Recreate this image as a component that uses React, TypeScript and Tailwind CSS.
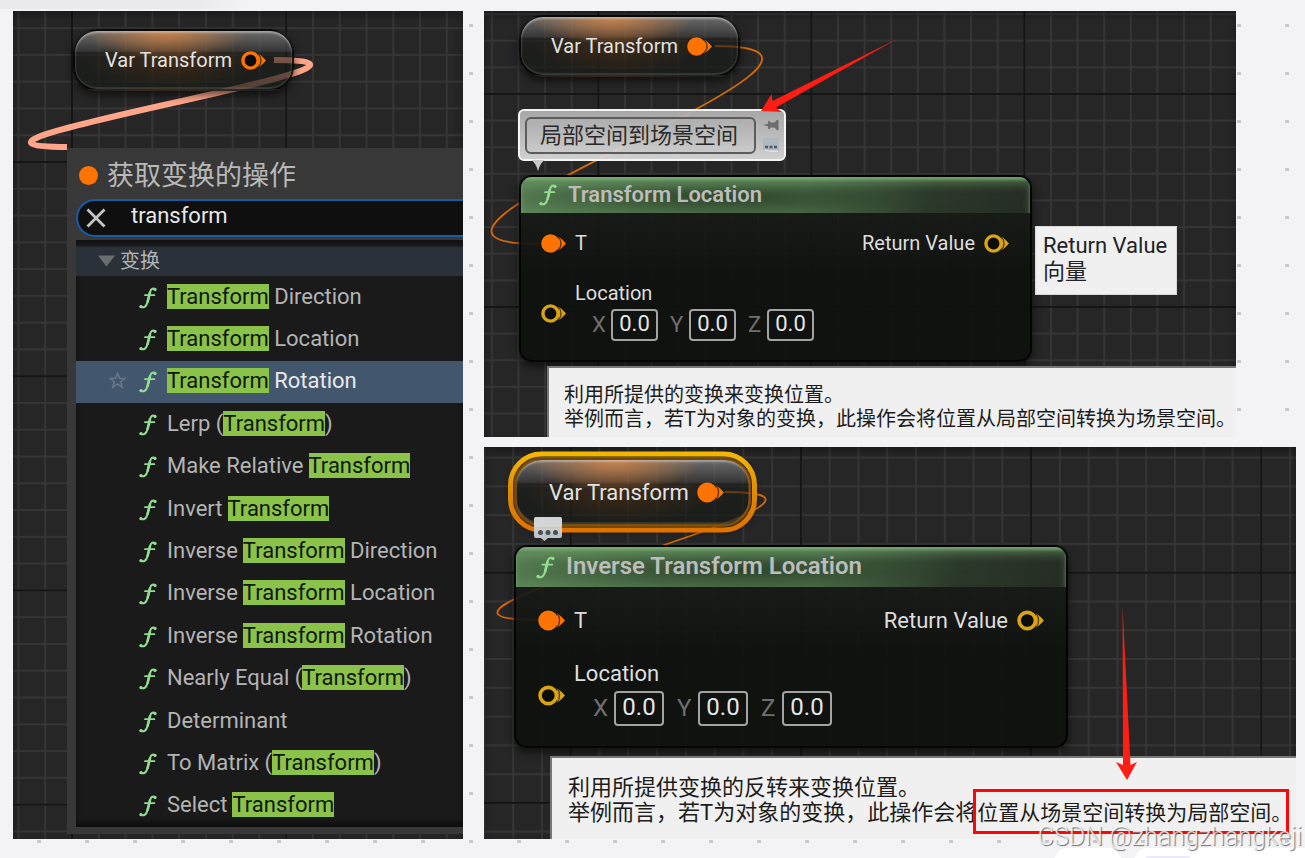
import React, { useId } from "react";

type Size = "sm" | "lg";

const ORANGE = "#ff7300";
const YELLOW = "#d9a514";

function Grid({ x, y, period }: { x: number; y: number; period: number }) {
  const id = useId();
  const cell = period / 8;
  return (
    <svg className="absolute inset-0 size-full" aria-hidden="true">
      <defs>
        <pattern id={`${id}minor`} x={x - 1} y={y - 1} width={cell} height={cell} patternUnits="userSpaceOnUse">
          <path d={`M0 1H${cell}M1 0V${cell}`} stroke="#353535" strokeWidth="2" />
        </pattern>
        <pattern id={`${id}major`} x={x - 1} y={y - 1} width={period} height={period} patternUnits="userSpaceOnUse">
          <path d={`M0 1H${period}M1 0V${period}`} stroke="#151515" strokeWidth="2" />
        </pattern>
      </defs>
      <rect width="100%" height="100%" fill="#262626" />
      <rect width="100%" height="100%" fill={`url(#${id}minor)`} />
      <rect width="100%" height="100%" fill={`url(#${id}major)`} />
    </svg>
  );
}

function Canvas({
  grid,
  className,
  label,
  children,
}: {
  grid: { x: number; y: number; period: number };
  className: string;
  label: string;
  children: React.ReactNode;
}) {
  return (
    <section aria-label={label} className={`relative overflow-hidden ${className}`}>
      <Grid {...grid} />
      <div className="absolute inset-0 shadow-[inset_0_4px_8px_rgba(0,0,0,0.3)]" />
      {children}
    </section>
  );
}

function Pin({ color, filled, size }: { color: string; filled?: boolean; size: Size }) {
  return (
    <svg
      viewBox="0 0 25 19"
      className={size === "sm" ? "h-[19px] w-[25px] shrink-0" : "h-[21px] w-[27px] shrink-0"}
      aria-hidden="true"
    >
      <path d="M17.5 2.8Q20.5 4.500 25 9.5Q20.500 14.500 17.5 16.2Z" fill={color} />
      <path d="M17.800 3Q22.200 9.500 17.800 16" fill="none" stroke="#2a1a05" strokeOpacity="0.75" strokeWidth="1.2" />
      {filled ? (
        <circle cx="9.5" cy="9.5" r="9.3" fill={color} />
      ) : (
        <circle cx="9.5" cy="9.5" r="7.6" fill="#0c0c0c" stroke={color} strokeWidth="3.4" />
      )}
    </svg>
  );
}

function FnIcon({ className }: { className: string }) {
  return (
    <svg viewBox="0 0 18 22" className={className} aria-hidden="true">
      <g fill="none" stroke="#92dd92" strokeLinecap="round">
        <path d="M16.2 2.4C13.6 .6 11.8 2.2 11.1 5L8.4 15.6C7.5 19.3 5 21.3 1.8 19.9" strokeWidth="2" />
        <path d="M10.9 5.6L8.6 15" strokeWidth="2.6" />
        <path d="M6 8.2H15.4" strokeWidth="1.8" />
      </g>
      <circle cx="16" cy="2.4" r="1.6" fill="#92dd92" />
      <circle cx="2" cy="19.6" r="1.7" fill="#92dd92" />
    </svg>
  );
}

function VarNode({
  size,
  filled,
  selected,
  className,
}: {
  size: Size;
  filled?: boolean;
  selected?: boolean;
  className: string;
}) {
  const id = useId();
  return (
    <div
      className={`absolute flex items-center border-2 border-black/70 bg-[radial-gradient(ellipse_38%_48%_at_42%_0%,rgba(214,134,72,0.9),rgba(214,134,72,0)),radial-gradient(ellipse_40%_50%_at_45%_50%,rgba(120,60,10,0.35),rgba(120,60,10,0)),linear-gradient(180deg,rgba(125,125,125,0.8)_0%,rgba(70,70,70,0.55)_34%,rgba(25,27,24,0.55)_38%,rgba(22,26,22,0.75)_100%)] text-[#e2e2e2] shadow-[inset_0_2px_2px_rgba(210,210,210,0.55),inset_0_-2px_1px_rgba(110,110,110,0.35),0_4px_8px_rgba(0,0,0,0.6)] ${
        size === "sm"
          ? "h-[62px] w-[221px] gap-[9px] rounded-[24px] pl-[30px] text-[20px]"
          : "h-[68px] w-[238px] gap-[8px] rounded-[27px] pl-[33px] text-[22px]"
      } ${className}`}
    >
      {selected && (
        <svg className="absolute -inset-[9px] h-[82px] w-[252px] overflow-visible" aria-hidden="true">
          <defs>
            <linearGradient id={id} x1="0" y1="0" x2="0" y2="1">
              <stop offset="0" stopColor="#f5b600" />
              <stop offset="0.5" stopColor="#dd8a06" />
              <stop offset="1" stopColor="#e07200" />
            </linearGradient>
          </defs>
          <rect x="3.500" y="3" width="244" height="76" rx="31" fill="none" stroke={`url(#${id})`} strokeWidth="5" />
          <rect x="8" y="7.500" width="235" height="67" rx="27" fill="none" stroke="#a06208" strokeOpacity="0.7" strokeWidth="3" />
        </svg>
      )}
      <span className="whitespace-nowrap">Var Transform</span>
      <Pin color={ORANGE} filled={filled} size={size} />
    </div>
  );
}

function VectorInput({ axis, size }: { axis: string; size: Size }) {
  return (
    <label className={`flex items-center text-[#6f6f6f] ${size === "sm" ? "gap-[5px] text-[22px]" : "gap-[6px] text-[24px]"}`}>
      <span className={size === "sm" ? "w-[14px]" : "w-[15px]"}>{axis}</span>
      <input
        defaultValue="0.0"
        className={`rounded-[4px] border-2 border-[#a3a3a3] bg-transparent pb-[2px] text-center text-[#e6e6e6] outline-none ${
          size === "sm" ? "h-[32px] w-[47px]" : "h-[35px] w-[50px]"
        }`}
      />
    </label>
  );
}

function FunctionNode({ title, size, className }: { title: string; size: Size; className: string }) {
  const sm = size === "sm";
  return (
    <article
      className={`absolute overflow-hidden rounded-[13px] border-2 border-black/80 bg-[linear-gradient(180deg,rgba(29,31,28,0.88),rgba(14,17,13,0.94)_55%)] text-[#dedede] shadow-[0_4px_8px_rgba(0,0,0,0.6)] ${
        sm ? "w-[513px] pb-[19px] text-[20px]" : "w-[554px] pb-[20px] text-[22px]"
      } ${className}`}
    >
      <header
        className={`flex items-center bg-[radial-gradient(ellipse_48%_60%_at_40%_58%,rgba(38,60,36,0.85),rgba(38,60,36,0)),linear-gradient(100deg,rgba(94,137,90,0.95)_0%,rgba(94,137,90,0.8)_55%,rgba(60,84,58,0.5)_80%,rgba(40,48,39,0.8)_100%)] shadow-[inset_0_3px_3px_rgba(125,180,120,0.75),inset_0_8px_8px_rgba(105,150,100,0.5)] ${
          sm ? "h-[36px] pl-[18px]" : "h-[40px] pl-[20px]"
        }`}
      >
        <FnIcon className={sm ? "h-[22px] w-[18px] shrink-0" : "h-[23px] w-[19px] shrink-0"} />
        <h2
          className={`pb-[2px] pl-[11px] font-semibold whitespace-nowrap text-[#bcbcbc] ${
            sm ? "text-[22px]" : "text-[24px]"
          }`}
        >
          {title}
        </h2>
      </header>
      <div
        className={`flex items-center justify-between ${
          sm ? "h-[46px] pt-[14px] pr-[21px] pl-[20px]" : "h-[50px] pt-[16px] pr-[22px] pl-[22px]"
        }`}
      >
        <div className="flex items-center gap-[9px]">
          <Pin color={ORANGE} filled size={size} />
          <span>T</span>
        </div>
        <div className="flex items-center gap-[9px]">
          <span>Return Value</span>
          <Pin color={YELLOW} size={size} />
        </div>
      </div>
      <fieldset className={`flex items-center gap-[9px] ${sm ? "mt-[22px] pl-[20px]" : "mt-[24px] pl-[22px]"}`}>
        <span className="pt-[4px]">
          <Pin color={YELLOW} size={size} />
        </span>
        <div>
          <div className={sm ? "mb-[3px] leading-[24px]" : "mb-[3px] leading-[26px]"}>Location</div>
          <div className={sm ? "flex gap-[12px] pl-[17px]" : "flex gap-[13px] pl-[19px]"}>
            {["X", "Y", "Z"].map((axis) => (
              <VectorInput key={axis} axis={axis} size={size} />
            ))}
          </div>
        </div>
      </fieldset>
    </article>
  );
}

const ACTIONS = [
  "Transform Direction",
  "Transform Location",
  "Transform Rotation",
  "Lerp (Transform)",
  "Make Relative Transform",
  "Invert Transform",
  "Inverse Transform Direction",
  "Inverse Transform Location",
  "Inverse Transform Rotation",
  "Nearly Equal (Transform)",
  "Determinant",
  "To Matrix (Transform)",
  "Select Transform",
];

function ActionMenu() {
  const active = "Transform Rotation";
  return (
    <div className="relative mt-[137px] mb-[5px] ml-[54px] bg-[#383838] pb-[7px] pl-[9px]">
      <div className="flex h-[51px] items-center gap-[9px] pt-[3px] pl-[3px]">
        <span className="size-[19px] rounded-full bg-[#ff7300]" />
        <h1 className="pt-[2px] text-[27px] leading-[32px] whitespace-nowrap text-[#b9b9b9]">获取变换的操作</h1>
      </div>
      <div className="flex h-[38px] items-center rounded-l-full border-2 border-r-0 border-[#175ba8] bg-[#0f0f0f] pl-[8px]">
        <button type="button" aria-label="清除" className="shrink-0">
          <svg viewBox="0 0 20 20" className="size-[20px]">
            <path d="M1.5 1.5L18.5 18.5M18.5 1.5L1.5 18.5" stroke="#c4c4c4" strokeWidth="2.8" />
          </svg>
        </button>
        <input
          aria-label="搜索"
          defaultValue="transform"
          className="ml-[25px] min-w-0 flex-1 bg-transparent pb-[5px] text-[22px] text-[#e8e8e8] outline-none"
        />
      </div>
      <div className="mt-[3px] bg-[#1a1a1a] shadow-[inset_0_-5px_5px_rgba(0,0,0,0.5)]">
        <button
          type="button"
          className="flex h-[36px] w-full items-center gap-[5px] bg-[linear-gradient(180deg,#111_0,#151719_5px,#2b3139_8px)] pt-[6px] pl-[22px] text-[20px] text-[#b4b4b4]"
        >
          <svg viewBox="0 0 17 12" className="h-[12px] w-[17px]" aria-hidden="true">
            <path d="M0 .5H17L8.500 11.500Z" fill="#6b6d70" />
          </svg>
          变换
        </button>
        <ul className="grid h-[551px] auto-rows-fr">
          {ACTIONS.map((action) => {
            const [before, after] = action.split("Transform");
            return (
              <li key={action} className="flex">
                <button
                  type="button"
                  className={`flex flex-1 items-center pb-[2px] pl-[33px] text-left text-[22px] whitespace-nowrap ${
                    action === active ? "bg-[#42566e] text-[#e9e9e9]" : "text-[#b4b4b4]"
                  }`}
                >
                  <svg viewBox="0 0 16 16" className="size-[17px] shrink-0" aria-hidden="true">
                    {action === active && (
                      <path
                        d="M8 1.200L10 6H15L11 9.200L12.500 14.500L8 11.300L3.500 14.500L5 9.200L1 6H6Z"
                        fill="none"
                        stroke="#6b7785"
                        strokeWidth="1.400"
                      />
                    )}
                  </svg>
                  <FnIcon className="mt-[3px] ml-[13px] h-[22px] w-[18px] shrink-0" />
                  <span className="pl-[10px]">
                    {before}
                    {after !== undefined && <mark className="bg-[#8bc34a] text-[#10180a]">Transform</mark>}
                    {after}
                  </span>
                </button>
              </li>
            );
          })}
        </ul>
      </div>
    </div>
  );
}

function SpeechIcon({ className }: { className: string }) {
  return (
    <svg viewBox="0 0 28 24" className={className} aria-hidden="true">
      <path d="M2 0H26Q28 0 28 2V19Q28 21 26 21H14L10.500 24L7 21H2Q0 21 0 19V2Q0 0 2 0Z" fill="#cfd6dc" fillOpacity="0.9" />
      <rect x="0" y="0" width="28" height="10" rx="2" fill="#e3e5e6" fillOpacity="0.5" />
      <circle cx="6.500" cy="15.500" r="2.500" fill="#47515b" />
      <circle cx="14" cy="15.500" r="2.500" fill="#47515b" />
      <circle cx="21.500" cy="15.500" r="2.500" fill="#47515b" />
    </svg>
  );
}

function CommentBubble() {
  return (
    <div className="absolute top-[98px] left-[34px] flex h-[52px] w-[268px] items-center rounded-[6px] border-2 border-[#f4f4f4] bg-[linear-gradient(180deg,rgba(178,178,178,0.92),rgba(222,222,222,0.92))] pl-[5px]">
      <input
        aria-label="注释"
        defaultValue="局部空间到场景空间"
        className="h-[37px] w-[231px] rounded-[6px] border-2 border-[#5c5c5c] bg-transparent pb-[5px] pl-[13px] text-[22px] text-[#2a2a2a] outline-none"
      />
      <div className="flex flex-col items-center gap-[7px] pl-[7px]">
        <svg viewBox="0 0 16 12" className="h-[12px] w-[16px]" aria-hidden="true">
          <path d="M0 6L5 4.800V2.500Q6.500 .5 7.500 3.500H11.500L14 .8H15.500V11.200H14L11.500 8.500H7.500Q6.500 11.500 5 9.500V7.200Z" fill="#6d6d6d" />
        </svg>
        <svg viewBox="0 0 16 14" className="h-[14px] w-[16px]" aria-hidden="true">
          <path d="M0 0H16V13H7L5 14L3 12H0Z" fill="#b0b8bf" />
          <path d="M2 9H5M6.500 9H9.500M11 9H14" stroke="#4d5a68" strokeWidth="2.400" />
          <path d="M2 11.500L5 13H15" stroke="#f2f2f2" fill="none" />
        </svg>
      </div>
      <svg viewBox="0 0 14 11" className="absolute -bottom-[12px] left-[11px] h-[11px] w-[14px]" aria-hidden="true">
        <path d="M0 0H14Q9 3 7 11Q5 3 0 0Z" fill="#c9c9c9" />
      </svg>
    </div>
  );
}

export default function App() {
  return (
    <main className="relative min-h-screen overflow-hidden bg-[#f3f3f5] font-['Roboto','Noto_Sans_CJK_SC',sans-serif]">
      <svg className="absolute inset-0 size-full" aria-hidden="true">
        <defs>
          <pattern id="dots" x="37" y="24" width="48" height="48" patternUnits="userSpaceOnUse">
            <rect width="4" height="3" fill="#c9c9cc" />
          </pattern>
          <linearGradient id="shade" x1="0" x2="1" y1="0" y2="0">
            <stop offset="0.8" stopColor="#eaeaec" />
            <stop offset="1" stopColor="#eaeaec" stopOpacity="0" />
          </linearGradient>
        </defs>
        <rect width="100%" height="100%" fill="url(#dots)" />
        <rect width="250" height="9" fill="url(#shade)" />
      </svg>

      <div className="relative grid grid-cols-[450fr_812fr] items-start gap-x-[21px] pt-[11px] pr-[9px] pl-[13px]">
        <Canvas label="Action menu" grid={{ x: 59, y: 151, period: 214.2 }} className="flow-root">
          <svg className="absolute inset-0 size-full" aria-hidden="true">
            <path d="M261 49C442 49 -127 136 54 136" fill="none" stroke="#ffa589" strokeWidth="6" />
          </svg>
          <VarNode size="sm" className="top-[18px] left-[60px]" />
          <ActionMenu />
        </Canvas>

        <div className="flex flex-col gap-[10px]">
          <Canvas label="Transform Location" grid={{ x: 114.3, y: 83, period: 213 }} className="mr-[60px] h-[426px]">
            <svg className="absolute inset-0 size-full" aria-hidden="true">
              <path d="M231 35C447 35 -162 233 55 233" fill="none" stroke="#d66a08" strokeWidth="1.8" />
            </svg>
            <VarNode size="sm" filled className="top-[4px] left-[35px]" />
            <FunctionNode title="Transform Location" size="sm" className="top-[164px] left-[35px]" />
            <CommentBubble />
            <div
              role="tooltip"
              className="absolute top-[215px] left-[551px] h-[69px] border border-[#d8d8d8] bg-[#f0f0f0] pt-[6px] pr-[9px] pl-[7px] text-[22px] leading-[26px] whitespace-nowrap text-[#222]"
            >
              Return Value
              <br />
              向量
            </div>
            <p className="absolute top-[355px] right-0 bottom-0 left-[63px] border-t-2 border-l-2 border-[#777] bg-[#f0f0f0] pt-[15px] pl-[15px] text-[20px] leading-[24px] whitespace-nowrap text-[#1c1c1c]">
              利用所提供的变换来变换位置。
              <br />
              举例而言，若T为对象的变换，此操作会将位置从局部空间转换为场景空间。
            </p>
            <svg className="pointer-events-none absolute inset-0 size-full" aria-hidden="true">
              <path d="M413 28L288.500 90L287.500 83L277 100L298 101L292 96.500Z" fill="#ff1d14" />
            </svg>
          </Canvas>

          <Canvas label="Inverse Transform Location" grid={{ x: 86.7, y: 125.7, period: 230.2 }} className="h-[392px]">
            <svg className="absolute inset-0 size-full" aria-hidden="true">
              <path d="M241 45C435 45 -140 173 54 173" fill="none" stroke="#d66a08" strokeWidth="1.8" />
            </svg>
            <VarNode size="lg" filled selected className="top-[11px] left-[30px]" />
            <FunctionNode title="Inverse Transform Location" size="lg" className="top-[98px] left-[30px]" />
            <SpeechIcon className="absolute top-[70px] left-[50px] h-[24px] w-[28px]" />
            <p className="absolute top-[309px] right-0 bottom-0 left-[66px] border-t-2 border-l-2 border-[#777] bg-[#f0f0f0] pt-[17px] pl-[16px] text-[22px] leading-[25px] whitespace-nowrap text-[#1c1c1c]">
              利用所提供变换的反转来变换位置。
              <br />
              举例而言，若T为对象的变换，此操作会将
              <span className="text-[21px]">位置从场景空间转换为局部空间。</span>
            </p>
            <div className="absolute top-[342px] left-[489px] h-[45px] w-[316px] border-3 border-[#fb0707]" />
            <svg className="pointer-events-none absolute inset-0 size-full" aria-hidden="true">
              <path d="M638.600 160L639 318L632 315L643 333L653 315L646.500 318Z" fill="#ff1d14" />
            </svg>
          </Canvas>
        </div>
      </div>

      <div className="absolute right-0 bottom-0 flex h-[10px] gap-[14px] overflow-hidden">
        <div className="h-[20px] w-[66px] rounded-t-[12px] bg-white" />
        <div className="h-[20px] w-[170px] rounded-tl-[12px] bg-white pt-[8px] pl-[10px]">
          <div className="h-[12px] w-[46px] rounded-t-[4px] bg-[#ece9fb]" />
        </div>
      </div>
      <div className="absolute right-[3px] bottom-[6px] text-[25px] leading-[30px] font-light whitespace-nowrap text-white/80 [text-shadow:1px_1px_1px_rgba(70,70,70,0.8)]">
        CSDN @zhangzhangkeji
      </div>
    </main>
  );
}
